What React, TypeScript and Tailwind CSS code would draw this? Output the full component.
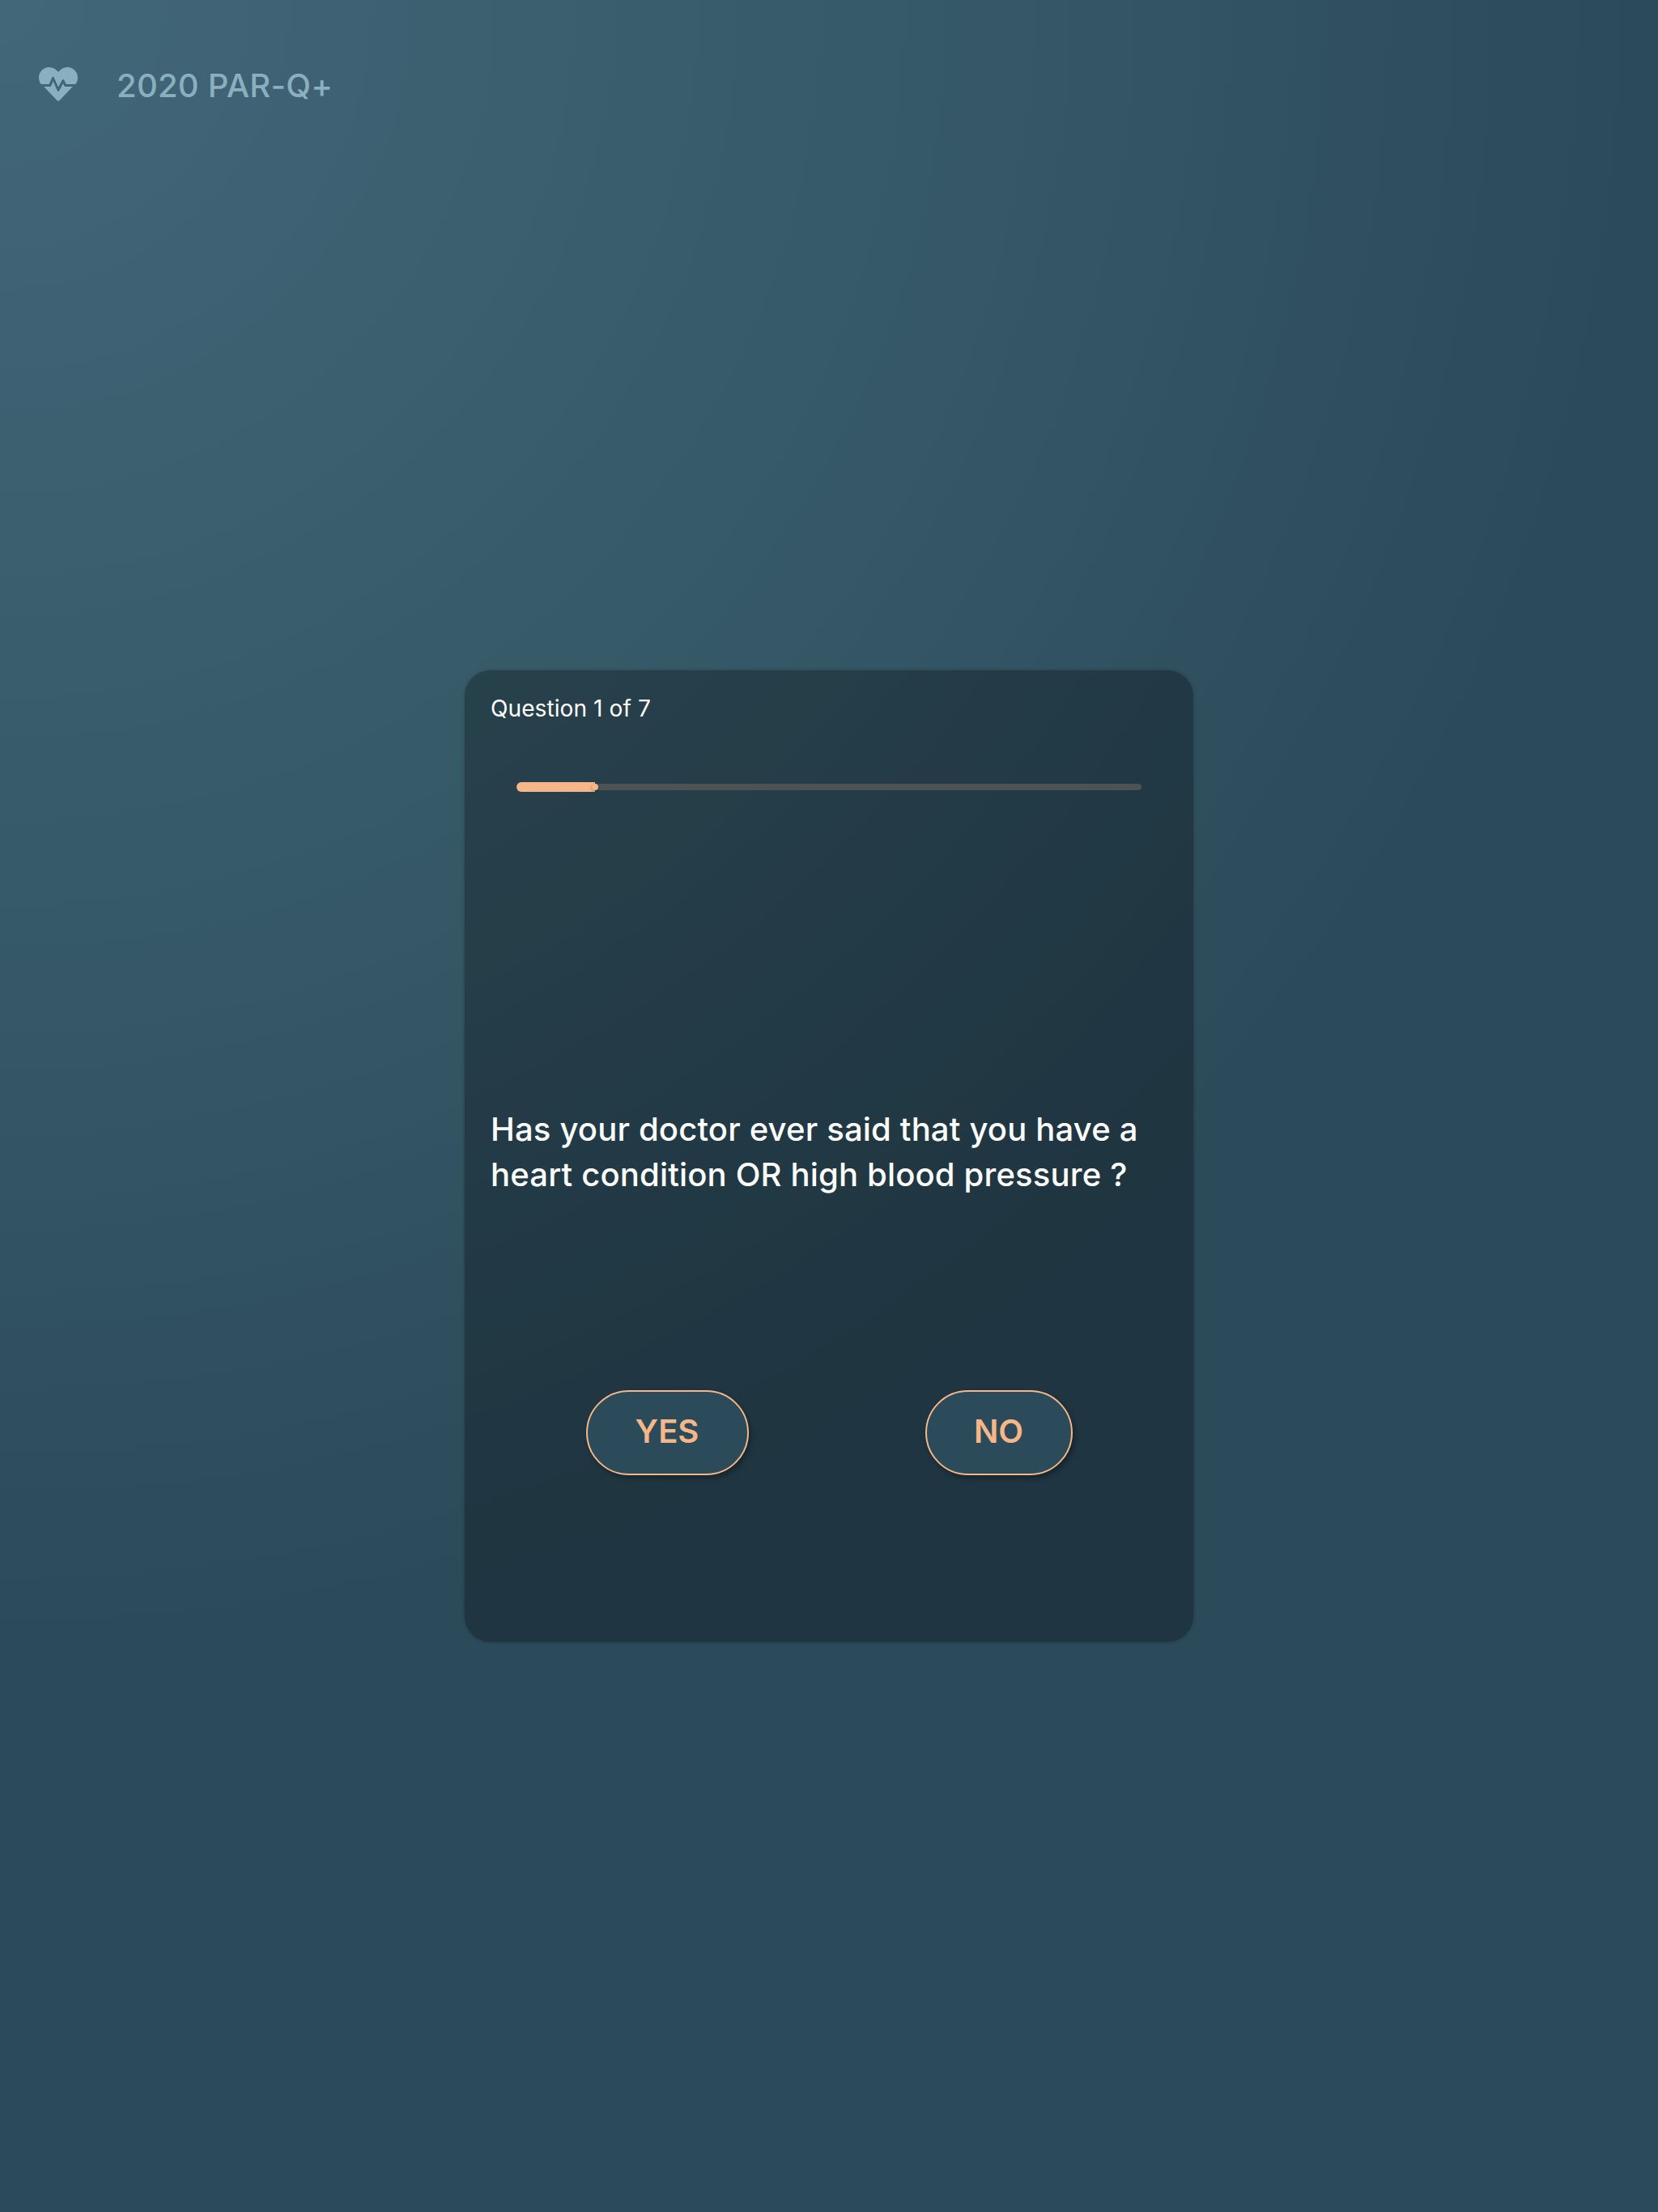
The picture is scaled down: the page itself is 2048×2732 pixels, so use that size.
import React from "react";

function HeartPulse() {
  return (
    <svg className="h-[42px] w-[48px] shrink-0" viewBox="0 0 48 42" fill="#8aafbf">
      <path d="M24 6C21 2 17 0 12.8 0 5.5 0 0 5.7 0 12.8 0 15.800 .9 18.900 2.700 21H12.600L16.300 12.700Q17.500 10.800 18.700 12.700L24 24.500 28.700 16Q30 14.200 31.200 16L33.800 21H45.300C47.100 18.900 48 15.800 48 12.800 48 5.700 42.500 0 35.200 0 31 0 27 2 24 6Z" />
      <path d="M6.200 24H13.500Q14.800 24 15.400 22.700L17.600 17.300 22.800 29Q24 31 25.200 29L30 20.200 31.500 23Q32 24 33.300 24H41.800L25.600 41Q24 42.500 22.400 41Z" />
    </svg>
  );
}

function AnswerButton({ label, className }: { label: string; className: string }) {
  return (
    <button
      className={`h-[105px] shrink-0 rounded-full border-2 border-[#f5b688] bg-[#2c4b5a] pb-[3px] text-[40px] leading-[56px] font-semibold text-[#f5b688] shadow-[3px_4px_6px_rgba(0,0,0,0.3)] ${className}`}
    >
      {label}
    </button>
  );
}

export default function App() {
  return (
    <main className="flex h-[2732px] w-[2048px] flex-col bg-[radial-gradient(circle_2060px_at_0_0,#426779_0%,#375a69_51%,#2b4a5a_100%)] font-['Inter',sans-serif]">
      <header className="flex h-[828px] items-start gap-[48px] pl-12 pt-[78px]">
        <div className="pt-[5px]">
          <HeartPulse />
        </div>
        <h1 className="whitespace-nowrap text-[40px] leading-[56px] font-medium tracking-[0.25px] text-[#8aafbf]">
          2020 PAR-Q+
        </h1>
      </header>
      <section className="mx-auto flex h-[1200px] w-[900px] flex-col rounded-[32px] bg-black/28 px-8 pt-[27px] text-white shadow-[0_0_4px_rgba(0,0,0,0.24)]">
        <p className="text-[28px] leading-10 tracking-[0.1px]">Question 1 of 7</p>
        <div className="mt-[71px] ml-8 flex h-3 w-[772px] items-center">
          <div className="relative h-3 w-[97px] rounded-l-full bg-[#f5b688]">
            <span className="absolute top-[2px] -right-1 size-2 rounded-full bg-[#f5b688] shadow-[0_1px_3px_rgba(0,0,0,0.3)]" />
          </div>
          <div className="h-2 flex-1 rounded-r-full bg-[#4c5352]" />
        </div>
        <h2 className="mt-[389px] whitespace-nowrap text-[40px] leading-[56px] font-medium tracking-[0.18px]">
          Has your doctor ever said that you have a
          <br />
          heart condition OR high blood pressure ?
        </h2>
        <div className="mt-[238px] flex gap-[218px] pl-[117.5px]">
          <AnswerButton label="YES" className="w-[201px]" />
          <AnswerButton label="NO" className="w-[182px]" />
        </div>
      </section>
    </main>
  );
}
